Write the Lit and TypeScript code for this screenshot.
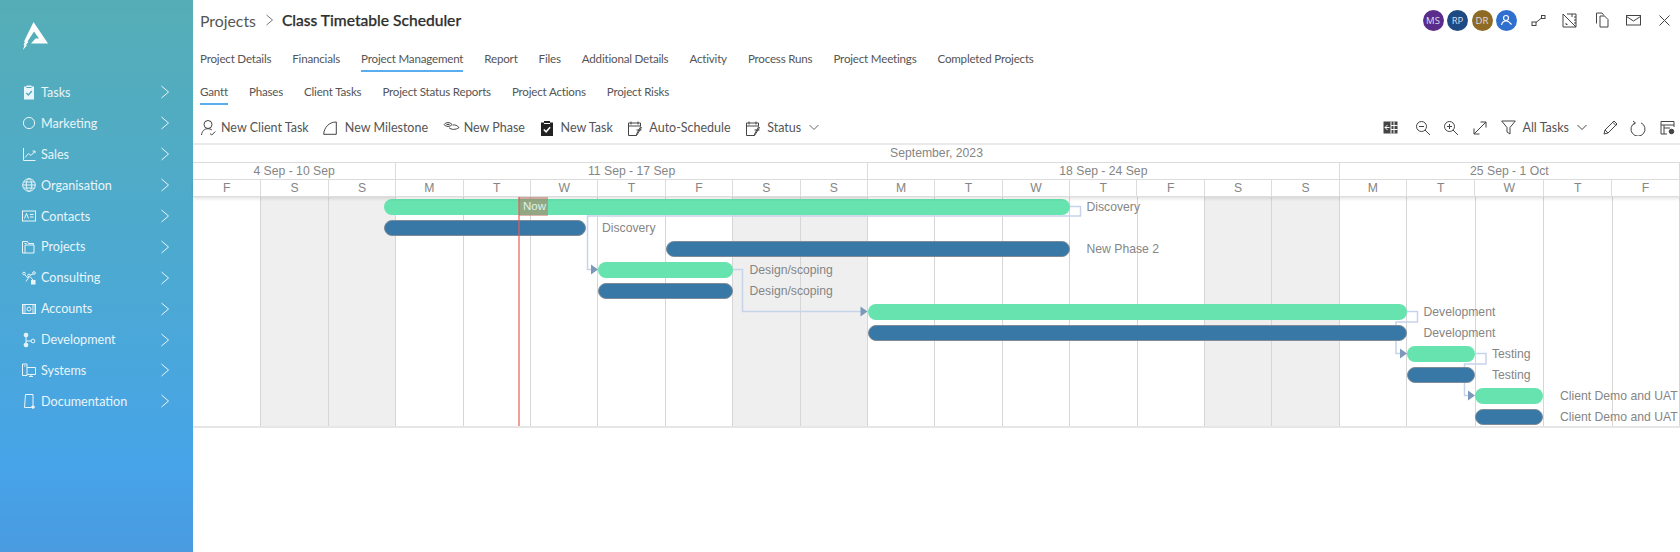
import { LitElement, html, css, svg } from "lit";
import { customElement } from "lit/decorators.js";

const i = (w: number, body: unknown, h = w, vb = `0 0 ${w} ${h}`) =>
  html`<svg class="ic" width=${w} height=${h} viewBox=${vb} fill="none" stroke="currentColor" stroke-width="1">${body}</svg>`;

const navIcons: Record<string, unknown> = {
  Tasks: i(16, svg`<path fill="currentColor" stroke="none" d="M3 2.500h2.500V1.500h5v1H13v13H3z"/><path stroke="#4fa9c4" stroke-width="1.400" d="M5.300 9l2 2 3.600-4"/><path stroke="#4fa9c4" d="M5.500 3.500h5"/>`),
  Marketing: i(16, svg`<circle cx="8" cy="8" r="5.600"/>`),
  Sales: i(16, svg`<path d="M2.500 2v12.500h12"/><path d="M4 11.500l3.500-4 2.500 2L14 5M11.500 5H14v2.300"/>`),
  Organisation: i(16, svg`<circle cx="8" cy="8" r="6.300"/><ellipse cx="8" cy="8" rx="2.800" ry="6.300"/><path d="M1.700 8h12.600M2.600 5h10.800M2.600 11h10.800"/>`),
  Contacts: i(16, svg`<rect x="1.500" y="3" width="13" height="10"/><path d="M3.500 10.500L5.500 5.500l2 5M9 6.500h3.500M9 9h3.500"/>`),
  Projects: i(16, svg`<path d="M1.500 14V2.500h5l1 2h5V6M1.500 14h11.500V6H4v8M3.500 4.500h2"/>`),
  Consulting: i(16, svg`<circle cx="3" cy="3.500" r="1.300"/><circle cx="8" cy="5.500" r="1.300"/><circle cx="13" cy="3" r="1.300"/><path d="M4 5l2.800 3M11.800 4.200L9.300 5M8 7l-3 4.500M9.500 7l2.500 3"/><rect x="10.500" y="10.500" width="3.500" height="3.500" fill="currentColor"/>`),
  Accounts: i(16, svg`<rect x="1.500" y="3.500" width="13" height="9"/><circle cx="8" cy="8" r="2"/><path fill="currentColor" d="M1.500 3.500h3v9h-3zM11.500 3.500h3v9h-3z" opacity=".45"/>`),
  Development: i(16, svg`<circle cx="5" cy="3" r="1.900" fill="currentColor"/><circle cx="5" cy="13" r="1.900" fill="currentColor"/><circle cx="12" cy="9" r="1.900"/><path d="M5 3v10M5 9h5"/>`),
  Systems: i(16, svg`<path d="M1.500 13.500V2h4.500v11.500zM6 5.500h8.500v7H6M8 14.500h4M3 4h1.500M10 12.500v2"/>`),
  Documentation: i(16, svg`<path d="M3.500 14.500L4.500 1.500h7.500v10.500"/><path d="M3.500 14.500h7"/><circle cx="12" cy="14" r="1.300" fill="currentColor"/>`),
};
const nav = Object.keys(navIcons);
const tabs1 = ["Project Details", "Financials", "Project Management", "Report", "Files", "Additional Details", "Activity", "Process Runs", "Project Meetings", "Completed Projects"];
const tabs2 = ["Gantt", "Phases", "Client Tasks", "Project Status Reports", "Project Actions", "Project Risks"];
const calIcon = i(16, svg`<path d="M13.500 6.500V3H1.500v12.500h8M1.500 6h12M4 1.500v3M11 1.500v3"/><path d="M14.500 7.500l-4 6.500-1 1.500.3-2 3.700-6.500zM9.500 10h5"/>`);
const tools: [unknown, string, number][] = [
  [i(17, svg`<circle cx="8" cy="5.500" r="4"/><path d="M1.500 16c.5-4 3-6.300 6.500-6.300 1.500 0 2.800.4 3.800 1.200M10 14.500l1.800 1.500 3.500-3.500"/>`), "New Client Task", 4],
  [i(14, svg`<path d="M.7 13.300h12.600V1C6 1 1 6.500.7 13.300z"/>`), "New Milestone", 7.500],
  [i(17, svg`<path d="M1 5.500C3 3 7 3 9 5.500 7 8 3 8 1 5.500z"/><path d="M6 8.500c2 2.500 7 2.500 10 0-1.500-2-4-3-6.500-2.500"/><path d="M3.500 5.500h3"/>`), "New Phase", 4],
  [i(14, svg`<path fill="#222" stroke="none" d="M1 2.500h3V1h6v1.500h3V16H1z"/><path stroke="#fff" stroke-width="1.500" d="M3.800 9.500l2.300 2.300 4-4.500"/><path stroke="#fff" d="M4 3.500h6"/>`, 16), "New Task", 7],
  [calIcon, "Auto-Schedule", 6],
  [calIcon, "Status", 6],
];
const chev = i(10, svg`<path d="M.5 1l4.500 4.500L9.500 1"/>`, 7);

const DAYS = "FSSMTWTFSSMTWTFSSMTWTF".split("");
const colW = (n: number) => (n === 0 ? 68.4 : n < 18 ? 67.4 : n === 21 ? 67.45 : 68.45);
const colX = (n: number) => { let x = 0; for (let k = 0; k < n; k++) x += colW(k); return x; };
const WEEKS: [string, number, number][] = [["4 Sep - 10 Sep", 0, 3], ["11 Sep - 17 Sep", 3, 10], ["18 Sep - 24 Sep", 10, 17], ["25 Sep - 1 Oct", 17, 22]];
const O = 193;
const BARS: [string, number, number, string, number][] = [
  ["g", 383.5, 1069.5, "Discovery", 1086.5],
  ["b", 383.5, 585.5, "Discovery", 602],
  ["b", 665.5, 1069.5, "New Phase 2", 1086.5],
  ["g", 598, 733, "Design/scoping", 749.5],
  ["b", 598, 733, "Design/scoping", 749.5],
  ["g", 867.5, 1406.5, "Development", 1423.5],
  ["b", 867.5, 1406.5, "Development", 1423.5],
  ["g", 1406.5, 1475, "Testing", 1492],
  ["b", 1406.5, 1475, "Testing", 1492],
  ["g", 1475, 1543, "Client Demo and UAT", 1560],
  ["b", 1475, 1543, "Client Demo and UAT", 1560],
];
const y0 = 197.4;
const LINKS = [
  `M1069.500 207H1080.500V216.500H587.500V270H592`,
  `M733 270H742.500V312H861`,
  `M1406.500 312H1417.500V322.500H1396V354H1401`,
  `M1475 354H1486V364.500H1464.500V396H1469`,
];
const ARROWS: [number, number][] = [[598, 270], [867.5, 312], [1407, 354], [1475, 396]];

@customElement("app-root")
export class AppRoot extends LitElement {
  static styles = css`
    :host { display: block; width: 1680px; height: 552px; overflow: hidden; background: #fff; font-family: Lato, "Noto Sans", sans-serif; }
    * { box-sizing: border-box; }
    .ic { display: block; flex: none; }
    .app { display: flex; height: 552px; }
    .side { width: 193px; flex: none; background: linear-gradient(180deg, #55aeb6 0%, #4ca9d2 50%, #47a4e8 84%, #4a9be0 100%); color: #e9f5fa; padding-top: 22px; }
    .logo { display: block; margin-left: 22px; }
    .nav { display: flex; flex-direction: column; margin-top: 26px; }
    .nav-item { display: flex; align-items: center; height: 30.900px; padding-left: 21px; font-size: 12.600px; }
    .nav-item span { margin-left: 4px; flex: 1; }
    .nav-item .ch { margin-right: 24px; }
    .main { flex: 1; min-width: 0; display: flex; flex-direction: column; }
    .top { height: 40px; flex: none; display: flex; align-items: center; padding-left: 7px; color: #333; }
    .crumb { font-size: 15.800px; color: #555; }
    .sep { margin: 0 9px 0 10px; color: #777; }
    .title { font-size: 15.600px; font-weight: 500; color: #2e2e2e; -webkit-text-stroke: .25px #2e2e2e; }
    .top-right { margin-left: auto; display: flex; align-items: center; color: #444; }
    .av { width: 21px; height: 21px; border-radius: 50%; color: #dde; font-size: 9.500px; display: flex; align-items: center; justify-content: center; margin-right: 3.500px; font-family: "Open Sans", sans-serif; }
    .av.me { background: #2f6fd0; margin-right: 0; }
    .av.ms { background: #5a2d8c; }
    .av.rp { background: #1e4a84; }
    .av.dr { background: #8f6a24; }
    .tr-ic { margin-left: 14px; }
    .tr-2 { margin-left: 16px; }
    .tr-3 { margin-left: 18px; }
    .tr-4 { margin-left: 17px; }
    .tr-5 { margin-left: 18px; margin-right: 10px; }
    .tabs { display: flex; gap: 21px; padding-left: 7px; font-size: 11.600px; letter-spacing: -.2px; color: #555; flex: none; }
    .t1 { height: 32px; }
    .t2 { height: 33px; }
    .tab { height: 100%; display: flex; align-items: center; border-bottom: 2px solid transparent; }
    .t1 .tab { padding-top: 6px; }
    .t2 .tab { padding-top: 7px; }
    .tab.on { border-bottom-color: #5aaef0; }
    .toolbar { height: 40px; flex: none; display: flex; align-items: center; padding: 7px 0 0 7px; font-size: 12.500px; color: #555; border-bottom: 2px solid #eaeaea; }
    .tool { display: flex; align-items: center; margin-right: 14.600px; white-space: nowrap; }
    .tool svg { color: #444; }
    .status-ch { margin-left: -7px; color: #666; }
    .tb-right { margin-left: auto; display: flex; align-items: center; gap: 14px; color: #444; padding-right: 5px; }
    .tb-right .lbl { font-size: 12.500px; color: #555; margin-left: -8px; }
    .tb-right .sm { margin-left: -6px; margin-right: 2px; }
    .tb-right .pen { margin-right: -2px; }
    .tb-right .zo { margin-left: 3px; margin-right: -2px; }
    .gantt { font-family: "Liberation Sans", Arial, sans-serif; font-size: 12.200px; color: #858585; }
    .hrow { display: flex; height: 17.700px; border-bottom: 1px solid #dcdcdc; line-height: 16.700px; text-align: center; }
    .hrow.day { height: 16.600px; box-shadow: 0 2px 3px rgba(0,0,0,.1); position: relative; z-index: 3; background: #fff; }
    .hc { flex: none; border-right: 1px solid #dcdcdc; }
    .hc.full { width: 100%; border-right: 0; }
    .body { position: relative; height: 231px; border-bottom: 2px solid #e6e6e6; }
    .col { position: absolute; top: 0; bottom: 0; border-right: 1px solid #d6d6d6; }
    .col.we { background: #efefef; }
    .links { position: absolute; inset: 0; }
    .bar { position: absolute; height: 16.500px; border-radius: 8.250px; }
    .bar.g { background: #66e3ae; }
    .bar.b { background: #3778a6; border: 1px solid #7f8c98; }
    .lab { position: absolute; height: 17px; line-height: 17px; white-space: nowrap; }
    .now-line { position: absolute; top: 0; bottom: 0; width: 2px; background: rgba(235, 90, 90, .6); }
    .now { position: absolute; top: 0; height: 19px; width: 29px; background: rgba(190, 110, 90, .5); color: #dff3e6; font-size: 11.500px; line-height: 19px; padding-left: 4px; }
  `;

  private renderGantt() {
    return html`<div class="gantt">
      <div class="hrow"><div class="hc full">September, 2023</div></div>
      <div class="hrow">${WEEKS.map(([t, a, b]) => html`<div class="hc" style="width:${colX(b) - colX(a)}px">${t}</div>`)}</div>
      <div class="hrow day">${DAYS.map((d, n) => html`<div class="hc" style="width:${colW(n)}px">${d}</div>`)}</div>
      <div class="body">
        ${DAYS.map((d, n) => html`<div class="col ${d === "S" ? "we" : ""}" style="left:${colX(n)}px;width:${colW(n)}px"></div>`)}
        <svg class="links" width="1487" height="229" viewBox="${O} ${y0} 1487 229" fill="none">
          ${LINKS.map((d) => svg`<path d=${d} stroke="#c6d4ea" stroke-width="1.500"/>`)}
          ${ARROWS.map(([x, y]) => svg`<path d="M${x - 7} ${y - 5}L${x} ${y}L${x - 7} ${y + 5}Z" fill="#7c99bb"/>`)}
        </svg>
        ${BARS.map(([k, a, b, t, lx], r) => html`
          <div class="bar ${k}" style="left:${a - O}px;width:${b - a}px;top:${2 + r * 21}px"></div>
          <div class="lab" style="left:${lx - O}px;top:${2 + r * 21}px">${t}</div>`)}
        <div class="now-line" style="left:${518 - O}px"></div>
        <div class="now" style="left:${519 - O}px">Now</div>
      </div>
    </div>`;
  }

  render() {
    return html`<div class="app">
      <aside class="side">
        <svg class="logo" width="27" height="29" viewBox="0 0 27 29"><path fill="#fff" d="M11.500 0L26 21.500H9L13.500 16.500H17L12 9.500L5.500 19.500L6.500 20L4 22.500L5 23L1 28L2.500 23L1.500 22.500L3 20L2 19.500Z"/></svg>
        <nav class="nav">
          ${nav.map((n) => html`<div class="nav-item">${navIcons[n]}<span>${n}</span>
            <svg class="ic ch" width="8" height="14" viewBox="0 0 8 14" fill="none" stroke="currentColor"><path d="M.5 1l7 6-7 6"/></svg></div>`)}
        </nav>
      </aside>
      <main class="main">
        <div class="top">
          <span class="crumb">Projects</span>
          <svg class="ic sep" width="7" height="12" viewBox="0 0 7 12" fill="none" stroke="currentColor"><path d="M.5 1l6 5-6 5"/></svg>
          <span class="title">Class Timetable Scheduler</span>
          <div class="top-right">
            <div class="av ms">MS</div>
            <div class="av rp">RP</div>
            <div class="av dr">DR</div>
            <div class="av me"><svg width="13" height="13" viewBox="0 0 13 13" fill="none" stroke="#fff" stroke-width="1.200"><circle cx="6" cy="4" r="2.500"/><path d="M1.500 11c.5-2.500 2-4 4.500-4 2 0 3 .5 4 2l1.500 1.500"/></svg></div>
            <span class="tr-ic">${i(15, svg`<rect x="1" y="9" width="4" height="3.500"/><rect x="10.500" y="2.500" width="3.500" height="3"/><path d="M5 9.500L10.500 5"/>`)}</span>
            <span class="tr-2">${i(15, svg`<path d="M1 14V1l13 13zM14 14V1H5"/><path d="M4 10v1.500h1.500M10 1v3M12 4h2M12 7h2M12 10h2"/>`)}</span>
            <span class="tr-3">${i(14, svg`<path d="M1.500 11.500V1H7l2 2.500M5 15V4h4.500L13 7.500V15z"/>`, 16)}</span>
            <span class="tr-4">${i(15, svg`<rect x=".5" y="2.500" width="14" height="9.500"/><path d="M.5 3.500L7.500 8l7-4.500"/>`)}</span>
            <span class="tr-5">${i(11, svg`<path d="M.5.5l10 10M10.500.5l-10 10"/>`)}</span>
          </div>
        </div>
        <div class="tabs t1">${tabs1.map((t) => html`<div class="tab ${t === "Project Management" ? "on" : ""}">${t}</div>`)}</div>
        <div class="tabs t2">${tabs2.map((t) => html`<div class="tab ${t === "Gantt" ? "on" : ""}">${t}</div>`)}</div>
        <div class="toolbar">
          ${tools.map(([ic, t, g]) => html`<div class="tool">${ic}<span style="margin-left:${g}px">${t}</span></div>`)}
          <span class="status-ch">${chev}</span>
          <div class="tb-right">
            ${i(15, svg`<rect x=".5" y="1.500" width="14" height="12" fill="#444" stroke="none"/><path stroke="#fff" d="M8 1.500v12M8 5.500h6.500M8 9.500h6.500M11 1.500v12"/><path stroke="#fff" d="M6.500 7.500H2M4.500 5L2 7.500 4.500 10"/>`)}
            <span class="zo">${i(16, svg`<circle cx="6.500" cy="6.500" r="5"/><path d="M10 10l5 5M4 6.500h5"/>`)}</span>
            ${i(16, svg`<circle cx="6.500" cy="6.500" r="5"/><path d="M10 10l5 5M4 6.500h5M6.500 4v5"/>`)}
            ${i(14, svg`<path d="M1 13L13 1M7.500 1H13v5.500M1 7.500V13h5.500"/>`)}
            ${i(15, svg`<path d="M.7 1h13.600L9 7.500V14l-3-2V7.500z"/>`)}
            <span class="lbl">All Tasks</span>
            <span class="sm">${chev}</span>
            <span class="pen">${i(15, svg`<path d="M1 14l1-4L11 1l3 3-9 9zM10 2.500l3 3M2 10l3 3"/>`)}</span>
            ${i(16, svg`<path d="M5 2.800A7 7 0 1 0 11 2.800"/><path d="M3 1l2.500 2-2 1.500"/>`)}
            ${i(15, svg`<path d="M7 14H1V1.500h13V7M1 5h13M4 5v9M4 8h6"/><circle cx="11.500" cy="11.500" r="2.300" fill="#444"/>`)}
          </div>
        </div>
        ${this.renderGantt()}
      </main>
    </div>`;
  }
}
